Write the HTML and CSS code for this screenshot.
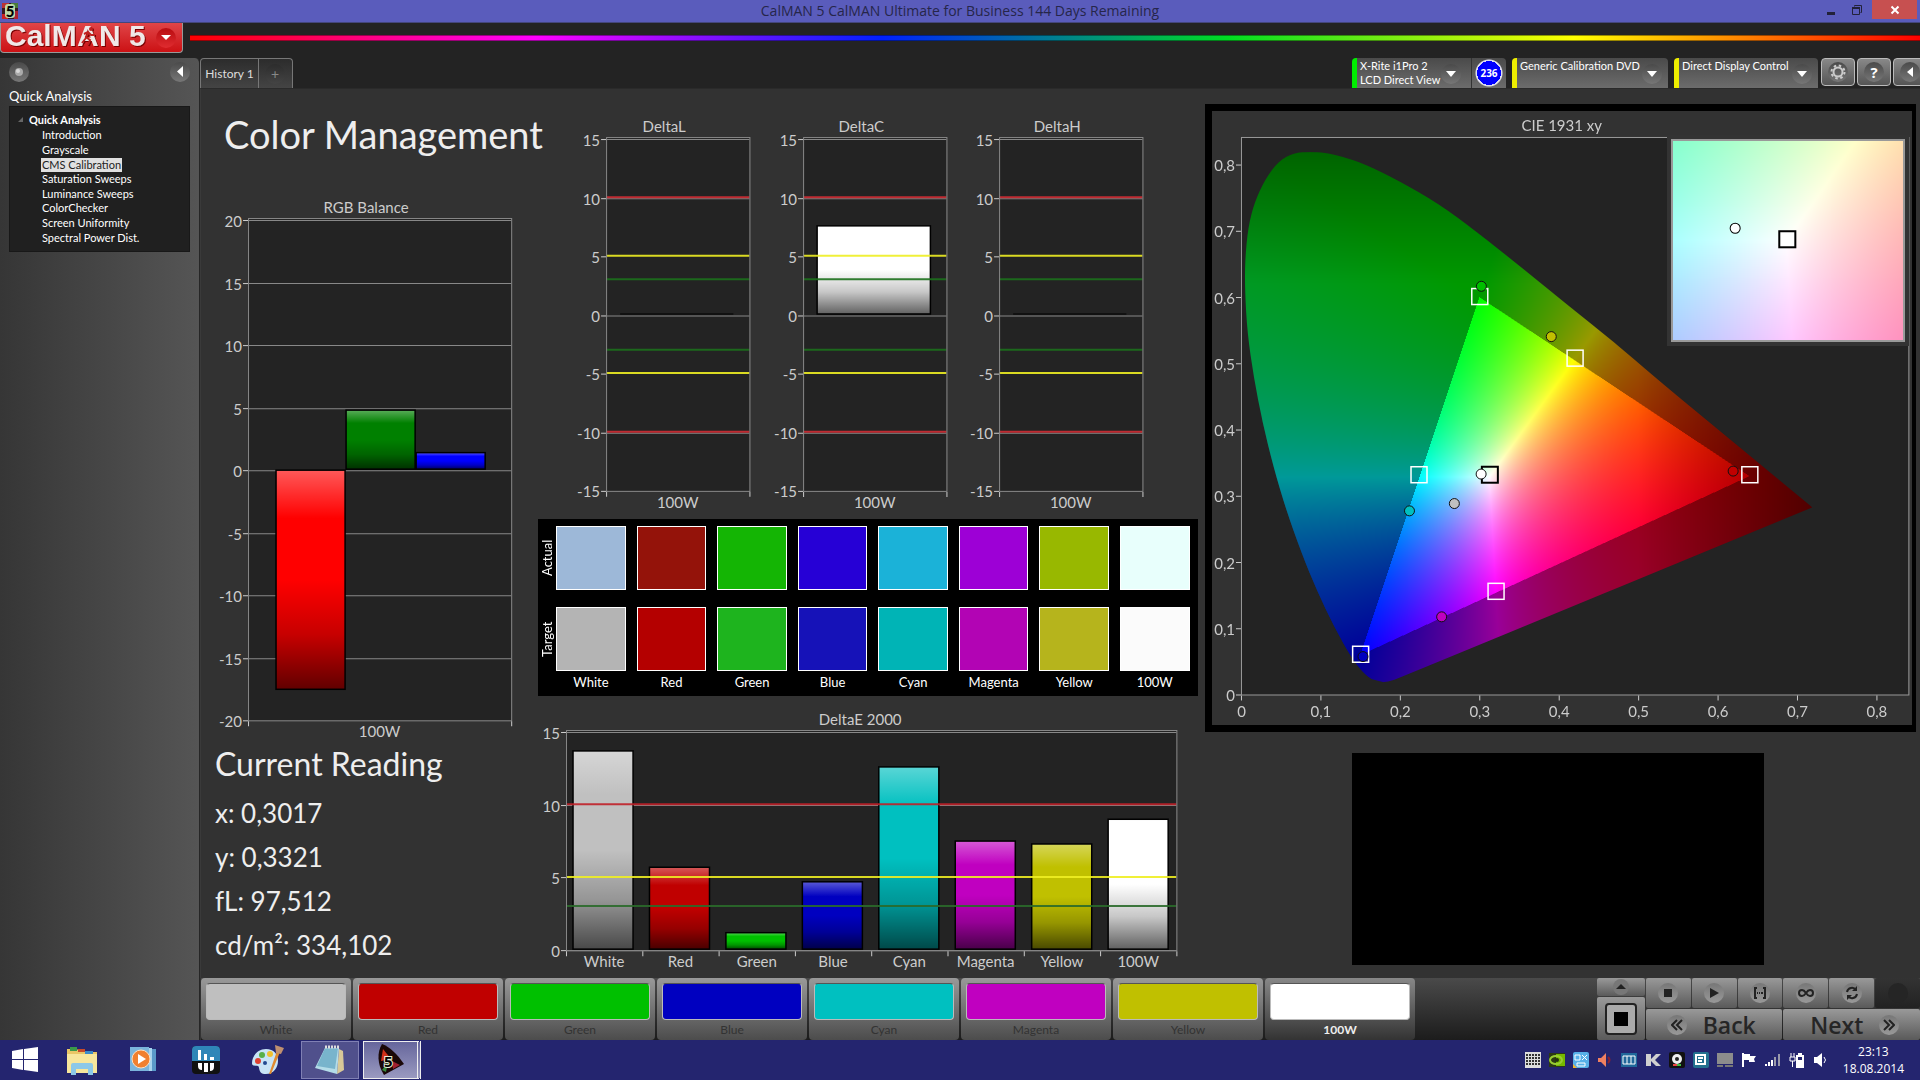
FILE: index.html
```html
<!DOCTYPE html>
<html lang="en">
<head>
    <meta charset="utf-8">
    <title>CalMAN 5</title>
    <meta name="viewport" content="width=device-width">
    <link rel="stylesheet" href="styles.css">
</head>
<body>
    <header class="titlebar">
        <svg class="app-icon" viewBox="0 0 16 16">
            <rect width="16" height="16" fill="#3a1a20"/>
            <rect width="7" height="5" fill="#b33"/><rect x="9" width="7" height="5" fill="#4a7a3a"/>
            <rect y="11" width="6" height="5" fill="#c22"/><rect x="12" y="8" width="4" height="8" fill="#a23"/>
            <rect x="3" y="1" width="10" height="14" rx="3" fill="#bcd8a8"/>
            <text x="8" y="14" text-anchor="middle" font-size="15" font-weight="900">5</text>
        </svg>
        <h1 class="titlebar-text">CalMAN 5 CalMAN Ultimate for Business 144 Days Remaining</h1>
        <div class="window-buttons">
            <button aria-label="Minimize"><svg width="12" height="12"><path d="M2 8h8v3H2z" fill="#22223a"/></svg></button>
            <button aria-label="Restore"><svg width="12" height="12" fill="none" stroke="#22223a"><path d="M3.500 2.500v-1h7v7h-1"/><path d="M1.500 4h7v6.500h-7z" /><path d="M1 4h8" stroke-width="2"/></svg></button>
            <button class="close" aria-label="Close"><svg width="10" height="10"><path d="M1.500 1.500l7 7m0-7l-7 7" stroke="#fff" stroke-width="2"/></svg></button>
        </div>
    </header>

    <div class="brandbar">
        <button class="brand" aria-label="CalMAN 5 menu">
            <svg class="brand-logo" viewBox="0 0 148 30">
                <g fill="#f0e8e8" font-family="Liberation Sans" font-weight="bold" font-size="30">
                    <text x="4" y="23">CalM</text>
                    <text x="76" y="23">A</text>
                    <text x="98" y="23">N</text>
                    <text x="128" y="23">5</text>
                </g>
                <g stroke="#c02020" stroke-width="2" fill="none">
                    <path d="M88 9l-3 5 4 3-2 5M85 15l-4 5M83 11l4-2 3 3h4"/>
                    <circle cx="90" cy="6" r="1" fill="#c02020"/>
                </g>
            </svg>
            <span class="knob knob-red"><svg width="10" height="6"><path d="M0 0h10l-5 5z" fill="#fff"/></svg></span>
        </button>
        <div class="rainbow"></div>
    </div>

    <div class="app">
        <nav class="sidebar">
            <div class="sidebar-top">
                <button class="knob" aria-label="Record"><svg width="10" height="10"><circle cx="5" cy="5" r="4" fill="#aaa"/><circle cx="4" cy="4" r="2" fill="#d8d8d8"/></svg></button>
                <button class="knob" aria-label="Collapse"><svg width="7" height="12"><path d="M6 0v11L0 5.500z" fill="#fff"/></svg></button>
            </div>
            <h2 class="sidebar-title">Quick Analysis</h2>
            <div class="tree">
                <div class="tree-root"><svg width="5" height="5"><path d="M5 0v5H0z" fill="#666"/></svg>Quick Analysis</div>
                <ul class="tree-items">
                    <li><a href="#">Introduction</a></li>
                    <li><a href="#">Grayscale</a></li>
                    <li><a href="#" class="selected">CMS Calibration</a></li>
                    <li><a href="#">Saturation Sweeps</a></li>
                    <li><a href="#">Luminance Sweeps</a></li>
                    <li><a href="#">ColorChecker</a></li>
                    <li><a href="#">Screen Uniformity</a></li>
                    <li><a href="#">Spectral Power Dist.</a></li>
                </ul>
            </div>
        </nav>

        <main class="main">
            <div class="toolbar">
                <div class="tabs">
                    <button class="tab">History 1</button>
                    <button class="tab tab-add" aria-label="Add tab"><span class="knob knob-dark">+</span></button>
                </div>
                <div class="devices">
                    <div class="device device-meter">
                        <button class="device-menu">
                            <span>X-Rite i1Pro 2<br>LCD Direct View</span>
                            <span class="knob"><svg width="10" height="6"><path d="M0 0h10l-5 6z" fill="#fff"/></svg></span>
                        </button>
                        <span class="badge">236</span>
                    </div>
                    <div class="device device-source">
                        <button class="device-menu">
                            <span>Generic Calibration DVD</span>
                            <span class="knob"><svg width="10" height="6"><path d="M0 0h10l-5 6z" fill="#fff"/></svg></span>
                        </button>
                    </div>
                    <div class="device device-display">
                        <button class="device-menu">
                            <span>Direct Display Control</span>
                            <span class="knob"><svg width="10" height="6"><path d="M0 0h10l-5 6z" fill="#fff"/></svg></span>
                        </button>
                    </div>
                    <button class="square" aria-label="Settings"><span class="knob"><svg width="16" height="16" fill="none" stroke="#ccc"><circle cx="8" cy="8" r="4.500" stroke-width="2"/><circle cx="8" cy="8" r="6.500" stroke-width="2" stroke-dasharray="2.500 2.600"/></svg></span></button>
                    <button class="square" aria-label="Help"><span class="knob knob-help">?</span></button>
                    <button class="square square-cut" aria-label="Collapse panel"><span class="knob"><svg width="7" height="10"><path d="M6 0v10L0 5z" fill="#fff"/></svg></span></button>
                </div>
            </div>

            <div class="workspace">
                <section class="col-left">
                    <h2 class="page-title">Color Management</h2>
                    <div class="rgb-chart"><svg id="rgbBalance" class="chart"></svg></div>
                    <div class="reading">
                        <h3>Current Reading</h3>
                        <p>x: 0,3017</p>
                        <p>y: 0,3321</p>
                        <p>fL: 97,512</p>
                        <p>cd/m²: 334,102</p>
                    </div>
                </section>

                <section class="col-middle">
                    <div class="delta-row">
                        <svg id="deltaL" class="chart"></svg>
                        <svg id="deltaC" class="chart"></svg>
                        <svg id="deltaH" class="chart"></svg>
                    </div>
                    <table class="swatches">
                        <tr>
                            <th scope="row"><span>Actual</span></th>
                            <td><i class="a-white"></i></td><td><i class="a-red"></i></td>
                            <td><i class="a-green"></i></td><td><i class="a-blue"></i></td>
                            <td><i class="a-cyan"></i></td><td><i class="a-magenta"></i></td>
                            <td><i class="a-yellow"></i></td><td><i class="a-100w"></i></td>
                        </tr>
                        <tr>
                            <th scope="row"><span>Target</span></th>
                            <td><i class="t-white"></i>White</td><td><i class="t-red"></i>Red</td>
                            <td><i class="t-green"></i>Green</td><td><i class="t-blue"></i>Blue</td>
                            <td><i class="t-cyan"></i>Cyan</td><td><i class="t-magenta"></i>Magenta</td>
                            <td><i class="t-yellow"></i>Yellow</td><td><i class="t-100w"></i>100W</td>
                        </tr>
                    </table>
                    <svg id="deltaE" class="chart"></svg>
                </section>

                <section class="col-right">
                    <div class="cie">
                        <canvas id="gamut"></canvas>
                        <svg id="cieChart" class="chart"></svg>
                        <div class="inset">
                            <canvas id="gamutInset"></canvas>
                            <svg viewBox="0 0 233 202">
                                <circle cx="64" cy="89" r="5" fill="#fff" stroke="#000"/>
                                <rect x="108" y="92" width="16" height="16" fill="#fff" stroke="#000" stroke-width="2"/>
                            </svg>
                        </div>
                    </div>
                    <div class="pattern-preview"></div>
                </section>
            </div>

            <footer class="bottombar">
                <div class="patches">
                    <button class="patch"><i class="p-white"></i>White</button>
                    <button class="patch"><i class="p-red"></i>Red</button>
                    <button class="patch"><i class="p-green"></i>Green</button>
                    <button class="patch"><i class="p-blue"></i>Blue</button>
                    <button class="patch"><i class="p-cyan"></i>Cyan</button>
                    <button class="patch"><i class="p-magenta"></i>Magenta</button>
                    <button class="patch"><i class="p-yellow"></i>Yellow</button>
                    <button class="patch patch-on"><i class="p-100w"></i>100W</button>
                </div>
                <div class="window-size">
                    <button class="size-up" aria-label="Pattern options"><span class="knob"><svg width="10" height="6"><path d="M0 5h10L5 0z" fill="#222"/></svg></span></button>
                    <button class="size-box" aria-label="Pattern size"><svg width="32" height="32"><rect x="1" y="1" width="30" height="30" rx="3" fill="#aaa" stroke="#222" stroke-width="2"/><path d="M9 9h14v14H9z"/></svg></button>
                </div>
                <div class="transport">
                    <button aria-label="Stop"><span class="knob"><svg width="10" height="10"><path d="M1 1h8v8H1z" fill="#222"/></svg></span></button>
                    <button aria-label="Play"><span class="knob"><svg width="10" height="12"><path d="M1 1l9 5-9 5z" fill="#222"/></svg></span></button>
                    <button aria-label="Read series"><span class="knob"><svg width="14" height="12" fill="none" stroke="#222" stroke-width="2"><path d="M4 1H2v10h2M10 1h2v10h-2M4 6h1M6 6h1M8 6h2"/></svg></span></button>
                    <button aria-label="Read continuous"><span class="knob"><svg width="16" height="10" fill="none" stroke="#222" stroke-width="2"><path d="M8 5C6 2 5 2 4 2a3 3 0 000 6c1 0 2 0 4-3s3-3 4-3a3 3 0 010 6c-1 0-2 0-4-3z"/></svg></span></button>
                    <button aria-label="Repeat"><span class="knob"><svg width="14" height="14" fill="none" stroke="#222" stroke-width="2"><path d="M2 6a5 5 0 019-2M12 8a5 5 0 01-9 2"/><path d="M12 0v5H7zM2 14V9h5z" fill="#222" stroke="none"/></svg></span></button>
                    <button class="off" aria-label="Unavailable" disabled><span class="knob"></span></button>
                    <button class="nav-button nav-back"><span class="knob"><svg width="12" height="12" fill="none" stroke="#222" stroke-width="2"><path d="M6 1L1 6l5 5M11 1L6 6l5 5"/></svg></span>Back</button>
                    <button class="nav-button nav-next">Next<span class="knob"><svg width="12" height="12" fill="none" stroke="#222" stroke-width="2"><path d="M1 1l5 5-5 5M6 1l5 5-5 5"/></svg></span></button>
                </div>
            </footer>
        </main>
    </div>

    <div class="taskbar">
        <button class="task" aria-label="Start"><svg width="26" height="26" fill="#fff"><path d="M0 4l11-2v10H0zM12 2l14-2v12H12zM0 13h11v10L0 21zM12 13h14v12l-14-2z"/></svg></button>
        <button class="task" aria-label="File Explorer"><svg width="34" height="30"><path d="M2 4h10l3 3h17v20H2z" fill="#e9c766"/><path d="M5 2h7v4H5z" fill="#3a9a4a"/><path d="M13 4h7v3h-7z" fill="#c94a2a"/><path d="M20 6h8v3h-8z" fill="#3a8ac9"/><path d="M2 9h30v19H2z" fill="#f7e69c"/><path d="M6 30V20q0-2 2-2h18q2 0 2 2v10h-5v-6H11v6z" fill="#8cc8e8"/></svg></button>
        <button class="task" aria-label="Media Player"><svg width="28" height="26"><path d="M6 2h20v22H6z" fill="#5a9ac9"/><path d="M3 1h19v23H3z" fill="#a8d4ee"/><path d="M0 0h19v24H0z" fill="#7ab4dc"/><circle cx="11" cy="12" r="9" fill="#f08030" stroke="#ffe0c0"/><path d="M8 7l8 5-8 5z" fill="#fff"/></svg></button>
        <button class="task" aria-label="HCFR"><svg width="28" height="28"><rect width="28" height="28" rx="4" fill="#111"/><path d="M0 15V4q0-4 4-4h20q4 0 4 4v11z" fill="#2f86b8"/><path d="M6 4h3v10H6zM12 8h3v6h-3zM18 11h4v3h-4zM6 17h4v7q-4 0-4-4zM12 17h4v9h-4zM18 17h4v4q0 4-4 4z" fill="#fff"/></svg></button>
        <button class="task" aria-label="Paint"><svg width="32" height="30"><path d="M14 4C5 4 0 12 0 18c0 4 4 2 6 3s0 7 6 8c9 1 14-6 14-13S22 4 14 4z" fill="#c8e4f6"/><circle cx="6" cy="16" r="3" fill="#e04030"/><circle cx="10" cy="10" r="3" fill="#58b048"/><circle cx="18" cy="9" r="3" fill="#f0c030"/><circle cx="13" cy="18" r="2" fill="#224a90"/><path d="M25 6l3 1-9 22h-2z" fill="#e08a30"/><path d="M23 0l9 3-3 6-5-1z" fill="#c09070"/></svg></button>
        <button class="task task-open" aria-label="Notepad"><svg width="30" height="30"><path d="M24 4l4 2 1 19-7 4z" fill="#d8c898"/><path d="M10 3h14l-2 26L0 23z" fill="#b4dce8"/><path d="M10 3h13l-3 21L2 21z" fill="#78b4cc"/><path d="M10 2h14" stroke="#ddd" stroke-width="3" stroke-dasharray="2 1"/></svg></button>
        <button class="task task-active" aria-label="CalMAN"><svg width="28" height="32"><path d="M5 0c8 3 15 10 22 20L7 31C0 20 0 8 5 0z" fill="#1a0808"/><path d="M6 5l8 10-10 2z" fill="#d03018"/><path d="M11 18l-6 8 4 2z" fill="#38883a"/><path d="M15 17l8 4-7 4z" fill="#a02030"/><text x="7" y="23" font-family="Open Sans" font-size="15" font-weight="bold" stroke="#e8f0d8" stroke-width="2" paint-order="stroke">5</text></svg></button>

        <div class="tray">
            <svg width="16" height="16"><rect width="16" height="16" fill="#ddd"/><path d="M1 3h14M1 6h14M1 9h14M1 12h14" stroke="#333" stroke-width="2" stroke-dasharray="2 1"/></svg>
            <svg width="16" height="16"><rect y="1" width="16" height="14" fill="#2c3a14"/><path d="M7 2h9v12H7z" fill="#76b900"/><ellipse cx="7" cy="8" rx="6" ry="4" fill="none" stroke="#9c3" stroke-width="2"/><circle cx="8" cy="8" r="2" fill="#243010"/></svg>
            <svg width="16" height="16"><rect width="16" height="16" rx="2" fill="#58b0e8"/><path d="M2 3h5v5H2zM9 3l5 5m0-5L9 8M4 11h8v3H4z" fill="none" stroke="#fff"/><path d="M0 12l4 4H0z" fill="#f0b030"/></svg>
            <svg width="16" height="16"><path d="M1 6h3l5-5v14l-5-5H1z" fill="#f08060"/><path d="M11 5q3 3 0 6" fill="none" stroke="#8a2030" stroke-width="2"/></svg>
            <svg width="16" height="16"><rect y="1" width="16" height="14" fill="#20689a"/><path d="M2 4h12v8H2zM6 4v8M10 4v8" fill="none" stroke="#fff"/></svg>
            <svg width="16" height="16"><path d="M1 2h5v5l5-5h5l-6 6 6 6h-5L6 9v5H1z" fill="#d0d0d0"/></svg>
            <svg width="16" height="16"><rect width="16" height="16" rx="2" fill="#111"/><circle cx="8" cy="7" r="5" fill="#eee"/><circle cx="8" cy="7" r="2" fill="#222"/><path d="M4 13h4" stroke="#e44" stroke-width="2"/><path d="M8 13h4" stroke="#4b4" stroke-width="2"/></svg>
            <svg width="16" height="16"><rect width="16" height="16" rx="2" fill="#23718f"/><path d="M3 3h9v9H3zM5 6h5M5 9h4" fill="none" stroke="#fff" stroke-width="2"/></svg>
            <svg width="16" height="16"><path d="M0 1h16v11H0z" fill="#8c8c8c"/><path d="M0 14h6M8 14h8" stroke="#777" stroke-width="2"/></svg>
            <svg width="16" height="16"><path d="M1 1h2v14H1zM3 2h6v2h6l-2 3 1 3H8V8H3z" fill="#fff"/></svg>
            <svg width="16" height="16" fill="#fff"><path d="M0 12h2v2H0zM3 10h2v4H3zM6 8h2v6H6z"/><path d="M9 5h2v9H9zM13 2h2v12h-2z" fill="#99a"/></svg>
            <svg width="16" height="16" fill="none" stroke="#fff"><path d="M8 4h6v11H8z" stroke-width="2"/><path d="M9 8h4v6H9zM9 1h4v2H9z" fill="#fff" stroke="none"/><path d="M2 1v4M5 1v4M1 5h5v4H1zM3.500 9v6"/></svg>
            <svg width="16" height="16"><path d="M1 5h3l5-4v14l-5-4H1z" fill="#fff"/><path d="M11 5q3 3 0 6" fill="none" stroke="#fff" stroke-width="1"/></svg>
        </div>
        <time class="clock">23:13<br>18.08.2014</time>
    </div>
    <script src="script.js"></script>
</body>
</html>
```
FILE: styles.css
```css
* {
    box-sizing: border-box;
}

body {
    margin: 0;
    height: 100vh;
    display: flex;
    flex-direction: column;
    overflow: hidden;
    background: #232323;
    color: #fff;
    font-family: 'Lato', sans-serif;
    font-size: 13px;
}

button {
    border: 0;
    padding: 0;
    background: none;
    color: inherit;
    font: inherit;
    cursor: pointer;
}

h1, h2, h3, p, ul {
    margin: 0;
    padding: 0;
    font-weight: normal;
}

svg {
    display: block;
    flex: none;
}

/* title bar */

.titlebar {
    height: 23px;
    flex: none;
    display: flex;
    align-items: center;
    background: #5a5cbc;
    border-bottom: 1px solid #44467c;
}

.app-icon {
    width: 16px;
    margin-left: 2px;
}

.titlebar-text {
    flex: 1;
    padding-left: 84px;
    text-align: center;
    font: 14px/22px 'Open Sans', sans-serif;
    color: #26264a;
}

.window-buttons {
    display: flex;
    align-self: flex-start;
    padding-right: 3px;
}

.window-buttons button {
    width: 26px;
    height: 19px;
    display: grid;
    place-items: center;
}

.window-buttons .close {
    width: 45px;
    margin-left: 2px;
    background: #c75050;
}

/* logo strip */

.brandbar {
    height: 35px;
    flex: none;
    display: flex;
    align-items: flex-start;
    gap: 7px;
}

.brand {
    width: 183px;
    height: 30px;
    display: flex;
    align-items: center;
    gap: 7px;
    background: linear-gradient(#e04548, #cc1114);
    border: 1px solid #999;
    border-top: 0;
    border-radius: 0 0 4px 4px;
}

.brand-logo {
    width: 148px;
    height: 30px;
    overflow: visible;
    filter: drop-shadow(1px 1px 0 #700);
}

.rainbow {
    flex: 1;
    height: 6px;
    margin-top: 12px;
    background: linear-gradient(to right, #f00, #f0f, #0020ff, #0d2, #ff0, #f00);
    border: solid rgba(0, 0, 0, 0.4);
    border-width: 1px 0;
}

.knob {
    width: 20px;
    height: 20px;
    flex: none;
    display: grid;
    place-items: center;
    border-radius: 50%;
    background: linear-gradient(#4a4a4a, #777);
}

.knob-red {
    background: linear-gradient(#b80c10, #e02c30);
}

.knob-dark {
    background: linear-gradient(#2c2c2c, #444);
    color: #888;
    font-size: 14px;
}

/* sidebar */

.app {
    flex: 1;
    min-height: 0;
    display: flex;
}

.sidebar {
    width: 200px;
    flex: none;
    padding: 4px 9px 0;
    background: linear-gradient(to right, #363636, #555);
    border-right: 1px solid #262626;
    border-radius: 0 5px 0 0;
}

.sidebar-top {
    display: flex;
    justify-content: space-between;
}

.sidebar-title {
    margin-top: 4px;
    font-size: 13px;
    line-height: 20px;
}

.tree {
    padding: 4px 0 6px;
    background: #202020;
    border: 1px solid #181818;
    font-size: 11px;
}

.tree-root {
    display: flex;
    align-items: center;
    gap: 6px;
    padding-left: 8px;
    line-height: 17px;
    font-weight: bold;
}

.tree-items {
    height: 117px;
    padding-left: 31px;
    display: grid;
    grid-auto-rows: 1fr;
    align-items: center;
    list-style: none;
    line-height: 14px;
}

.tree-items a {
    display: inline-block;
    padding: 0 1px;
    color: #fff;
    text-decoration: none;
}

.tree-items .selected {
    background: #e0e0e0;
    color: #222;
}

/* tabs and devices */

.main {
    flex: 1;
    min-width: 0;
    display: flex;
    flex-direction: column;
}

.toolbar {
    height: 30px;
    flex: none;
    display: flex;
    justify-content: space-between;
    font-size: 12px;
}

.tabs {
    display: flex;
    border: 1px solid #777;
    border-bottom: 0;
    border-radius: 4px 4px 0 0;
    background: linear-gradient(#2c2c2c, #444);
}

.tab {
    width: 57px;
    color: #ddd;
}

.tab-add {
    width: 34px;
    padding-left: 6px;
    border-left: 1px solid #777;
}

.devices {
    display: flex;
    margin-right: -9px;
}

.device {
    display: flex;
    align-items: center;
    margin-right: 6px;
    background: linear-gradient(#4a4a4a, #6c6c6c);
    border-left: 5px solid #ee0;
    border-radius: 4px 4px 0 0;
    font-size: 11px;
    line-height: 14px;
}

.device-meter {
    width: 154px;
    border-left-color: #0e0;
}

.device-source {
    width: 156px;
}

.device-display {
    width: 144px;
    margin-right: 3px;
}

.device-menu {
    flex: 1;
    min-width: 0;
    align-self: stretch;
    display: flex;
    justify-content: space-between;
    padding: 1px 6px 0 3px;
    text-align: left;
    white-space: nowrap;
}

.device-menu .knob {
    align-self: center;
}

.device-meter .knob {
    margin-right: 4px;
}

.badge {
    width: 35px;
    height: 30px;
    display: grid;
    place-items: center;
    border-left: 1px solid #333;
    background: radial-gradient(circle, #00f 12px, #dde 12px, #dde 13px, transparent 14px);
    font: bold 10px 'Open Sans', sans-serif;
}

.square {
    width: 34px;
    height: 28px;
    margin-right: 2px;
    display: grid;
    place-items: center;
    background: linear-gradient(#888, #555);
    border: 1px solid #bbb;
    border-radius: 4px;
}

.knob-help {
    font: bold 15px 'Open Sans', sans-serif;
}

/* workspace */

.workspace {
    flex: 1;
    min-height: 0;
    display: grid;
    grid-template-columns: minmax(0, 329fr) minmax(0, 659fr) minmax(0, 711fr);
    column-gap: 7px;
    padding: 15px 4px 0 1px;
    background: #323232;
    border-top: 1px solid #2a2a2a;
    border-left: 1px solid #3a3a3a;
}

.chart {
    width: 100%;
    height: auto;
    color: #ccc;
    font-size: 15px;
}

.page-title {
    margin: 8px 0 39px 22px;
    font-size: 38px;
    line-height: 44px;
    white-space: nowrap;
    color: #eee;
}

.rgb-chart {
    padding: 0 13px 0 16px;
}

.reading {
    padding: 1px 0 0 13px;
    color: #eee;
    font-size: 26px;
    line-height: 44px;
}

.reading h3 {
    margin-bottom: 3px;
    font-size: 32px;
    line-height: 48px;
}

.delta-row {
    display: grid;
    grid-template-columns: repeat(3, 1fr);
    padding: 12px 40px 7px 30px;
}

.swatches {
    width: 100%;
    table-layout: fixed;
    border-spacing: 0;
    margin-bottom: 12px;
    padding-top: 7px;
    background: #000;
    line-height: 22px;
    text-align: center;
}

.swatches th {
    width: 15px;
    height: 81px;
    padding: 0;
    vertical-align: top;
    font-weight: normal;
    line-height: 18px;
}

.swatches th span {
    height: 64px;
    writing-mode: vertical-rl;
    transform: rotate(180deg);
    text-align: center;
}

.swatches td {
    padding: 0 8px 0 3px;
    vertical-align: top;
}

.swatches i {
    display: block;
    height: 64px;
    border: 1px solid #fff;
}

.swatches tr:last-child td {
    padding-bottom: 3px;
}

.a-white { background: #9db8d8; }
.a-red { background: #94130a; }
.a-green { background: #14b504; }
.a-blue { background: #2600d6; }
.a-cyan { background: #1bb2d8; }
.a-magenta { background: #9d00d6; }
.a-yellow { background: #98b800; }
.a-100w { background: #e8fffc; }
.t-white { background: #b4b4b4; }
.t-red { background: #b40000; }
.t-green { background: #1eb41e; }
.t-blue { background: #1612b8; }
.t-cyan { background: #00b4b6; }
.t-magenta { background: #b204b4; }
.t-yellow { background: #b6b41c; }
.t-100w { background: #fbfbfb; }

.cie {
    position: relative;
    border: 7px solid #000;
    border-right-width: 4px;
}

/* the canvas lies under the plot area of the chart */
.cie #gamut {
    position: absolute;
    left: 4.200%;
    top: 4.200%;
    width: 95.300%;
    height: 90.800%;
}

.cie .chart {
    position: relative;
}

.inset {
    position: absolute;
    right: 3px;
    top: 24px;
    width: 34.500%;
    border: 4px solid #333;
}

.inset canvas {
    display: block;
    width: 100%;
    aspect-ratio: 233 / 202;
    border: 2px solid #999;
}

.inset svg {
    position: absolute;
    inset: 0;
    width: 100%;
}

.pattern-preview {
    width: 58%;
    aspect-ratio: 411 / 211;
    margin: 21px auto 0 147px;
    background: #000;
}

/* bottom bar */

.bottombar {
    height: 62px;
    flex: none;
    display: flex;
    background: linear-gradient(#4a4a4a, #1c1c1c);
    border-left: 1px solid #333;
}

.patches {
    flex: 1;
    display: flex;
    gap: 2px;
}

.patch {
    width: 150px;
    padding: 5px 5px 0;
    background: linear-gradient(#999, #4c4c4c);
    border-radius: 4px;
    color: #333;
    font-size: 12px;
    line-height: 20px;
}

.patch i {
    display: block;
    height: 37px;
    border: 1px solid #bbb;
    border-top-color: #555;
    border-radius: 4px;
}

.patch-on {
    background: linear-gradient(#888, #333);
    color: #eee;
    font-weight: bold;
}

.p-white { background: #bfbfbf; }
.p-red { background: #c00000; }
.p-green { background: #00c000; }
.p-blue { background: #0000c0; }
.p-cyan { background: #00c0c0; }
.p-magenta { background: #c000c0; }
.p-yellow { background: #c0c000; }
.p-100w { background: #fff; }

.window-size {
    width: 48px;
    margin-right: 1px;
    display: grid;
    grid-template-rows: 18px 1fr;
    gap: 1px;
}

.window-size button,
.transport button {
    display: flex;
    align-items: center;
    justify-content: center;
    background: linear-gradient(#999, #5a5a5a);
    border-radius: 2px;
}

.window-size .knob {
    width: 16px;
    height: 16px;
    background: #777;
}

.transport {
    width: 274px;
    display: grid;
    grid-template-columns: repeat(6, 1fr);
    grid-template-rows: 30px 1fr;
    gap: 1px;
}

.transport .knob {
    background: linear-gradient(#777, #999);
}

.transport .off {
    background: linear-gradient(#333, #222);
}

.transport .off .knob {
    background: #252525;
}

.transport .nav-button {
    grid-column: span 3;
    gap: 16px;
    color: #262626;
    font: 600 23px/28px 'Open Sans', sans-serif;
}

.transport .nav-back {
    padding-right: 6px;
}

.transport .nav-next {
    padding-left: 6px;
}

/* taskbar */

.taskbar {
    height: 40px;
    flex: none;
    display: flex;
    align-items: center;
    padding-right: 16px;
    background: #24256f;
}

.task {
    width: 58px;
    height: 38px;
    margin-right: 4px;
    display: grid;
    place-items: center;
}

.task:first-child {
    width: 49px;
}

.task-open {
    background: #50508c;
    border: 1px solid #8080b4;
}

.task-active {
    background: linear-gradient(#66669c, #9a9ac0);
    border: 1px solid #eee;
    border-right: 4px double #eee;
}

.tray {
    display: flex;
    gap: 8px;
    margin: 0 14px 0 auto;
}

.clock {
    text-align: center;
    font: 12px/17px 'Open Sans', sans-serif;
}
```
FILE: script.js
```javascript
var SVG_NS = 'http://www.w3.org/2000/svg';

function add(parent, name, attrs, text) {
    var el = document.createElementNS(SVG_NS, name);
    for (var key in attrs) el.setAttribute(key, attrs[key]);
    if (text !== undefined) el.textContent = text;
    parent.appendChild(el);
    return el;
}

function label(svg, x, y, text, anchor) {
    add(svg, 'text', { x: x, y: y, fill: 'currentColor', 'text-anchor': anchor || 'middle' }, text);
}

function line(svg, x1, y1, x2, y2, color, width, opacity) {
    add(svg, 'line', { x1: x1, y1: y1, x2: x2, y2: y2, stroke: color, 'stroke-width': width || 1, 'stroke-opacity': opacity || 1 });
}

function gloss(svg, id) {
    var g = add(add(svg, 'defs', {}), 'linearGradient', { id: id, x1: 0, y1: 0, x2: 0, y2: 1 });
    [[0, '#fff', 0.35], [0.22, '#fff', 0], [0.5, '#000', 0], [0.75, '#000', 0.22], [1, '#000', 0.62]].forEach(function (s) {
        add(g, 'stop', { offset: s[0], 'stop-color': s[1], 'stop-opacity': s[2] });
    });
}

function barChart(id, c) {
    var svg = document.getElementById(id);
    var scale = (c.bottom - c.top) / (c.max - c.min);
    var y = function (v) { return c.bottom - (v - c.min) * scale; };

    svg.setAttribute('viewBox', '0 0 ' + c.width + ' ' + c.height);
    gloss(svg, id + 'Gloss');
    label(svg, c.titleX, c.top - 7, c.title);
    add(svg, 'rect', { x: c.left, y: c.top - 2, width: c.right - c.left, height: c.bottom - c.top + 2, fill: '#232323' });

    for (var v = c.min; v <= c.max; v += 5) {
        var ty = Math.round(y(v)) + 0.5;
        if (c.grid.indexOf(v) >= 0) line(svg, c.left, ty, c.right, ty, '#888');
        line(svg, c.left - 5, ty, c.left, ty, '#ccc');
        label(svg, c.left - 6, ty + 6, v, 'end');
    }

    c.bars.forEach(function (b) {
        var top = Math.min(y(b.value), y(0));
        var box = { x: b.x, y: top, width: b.width, height: Math.max(1, Math.abs(y(b.value) - y(0)) - 1) };
        if (!b.value) {
            line(svg, b.x, top - 1, b.x + b.width, top - 1, '#000');
            return;
        }
        add(svg, 'rect', Object.assign({ fill: b.color }, box));
        add(svg, 'rect', Object.assign({ fill: 'url(#' + id + 'Gloss)', stroke: '#000', 'stroke-width': 1.5 }, box));
    });

    (c.limits || []).forEach(function (l) {
        line(svg, c.left, y(l[0]) - 0.5, c.right, y(l[0]) - 0.5, l[1], 2, 0.9);
    });

    add(svg, 'rect', { x: c.left + 0.5, y: c.top - 1.5, width: c.right - c.left, height: c.bottom - c.top + 2, fill: 'none', stroke: '#888' });
    var step = (c.right - c.left) / c.labels.length;
    for (var i = 0; i <= c.labels.length; i++) {
        line(svg, c.left + 0.5 + i * step, c.bottom + 1, c.left + 0.5 + i * step, c.bottom + 6, '#ccc');
    }
    c.labels.forEach(function (text, n) {
        label(svg, c.left + (n + 0.5) * step, c.bottom + 17, text);
    });
}

barChart('rgbBalance', {
    title: 'RGB Balance', titleX: 148, width: 300, height: 544,
    left: 30, right: 293, top: 25, bottom: 525, min: -20, max: 20,
    grid: [-15, -10, -5, 0, 5, 10, 15, 20],
    bars: [
        { x: 58, width: 69, value: -17.6, color: '#f00' },
        { x: 128, width: 69, value: 4.8, color: '#008000' },
        { x: 198, width: 69, value: 1.4, color: '#00f' }
    ],
    labels: ['100W']
});

[['deltaL', 'DeltaL', 0], ['deltaC', 'DeltaC', 7.6], ['deltaH', 'DeltaH', 0]].forEach(function (d) {
    barChart(d[0], {
        title: d[1], titleX: 96, width: 196, height: 395,
        left: 38, right: 181, top: 23, bottom: 374, min: -15, max: 15,
        grid: [-10, 0, 10, 15],
        bars: [{ x: 52, width: 113, value: d[2], color: '#fff' }],
        limits: [[10, '#d02c34'], [5, '#ee2'], [3, '#1c701c'], [-3, '#1c701c'], [-5, '#ee2'], [-10, '#d02c34']],
        labels: ['100W']
    });
});

var patches = [
    ['White', 13.7, '#c0c0c0'], ['Red', 5.7, '#c00000'], ['Green', 1.2, '#00c000'], ['Blue', 4.7, '#0000c0'],
    ['Cyan', 12.6, '#00c0c0'], ['Magenta', 7.5, '#c000c0'], ['Yellow', 7.3, '#c0c000'], ['100W', 9, '#fff']
];

barChart('deltaE', {
    title: 'DeltaE 2000', titleX: 322, width: 659, height: 266,
    left: 28, right: 638, top: 24, bottom: 242, min: 0, max: 15,
    grid: [0, 10, 15],
    bars: patches.map(function (p, i) {
        return { x: 35 + i * 76.4, width: 60, value: p[1], color: p[2] };
    }),
    limits: [[10, '#c02028'], [5, '#ee2'], [3, '#2a6a2a']],
    labels: patches.map(function (p) { return p[0]; })
});

/* chromaticity diagram */

var RED = [0.64, 0.33], GREEN = [0.30, 0.60], BLUE = [0.15, 0.06];

function side(a, b, x, y) {
    return (b[0] - a[0]) * (y - a[1]) - (b[1] - a[1]) * (x - a[0]);
}

function inGamut(x, y) {
    return side(RED, GREEN, x, y) >= 0 && side(GREEN, BLUE, x, y) >= 0 && side(BLUE, RED, x, y) >= 0;
}

function colorAt(x, y) {
    var X = x / y, Z = (1 - x - y) / y;
    var rgb = [
        3.2406 * X - 1.5372 - 0.4986 * Z,
        -0.9689 * X + 1.8758 + 0.0415 * Z,
        0.0557 * X - 0.2040 + 1.0570 * Z
    ].map(function (v) { return Math.max(0, v); });
    var k = 255 / Math.max(rgb[0], rgb[1], rgb[2]);
    if (!inGamut(x, y)) k *= 0.6;
    k *= 1 - Math.max(0, x - 0.5) * 2.15;
    k *= 1 - Math.max(0, y - 0.62) * 1.75;
    return rgb.map(function (v) { return v * k; });
}

function paint(canvas, w, h, x0, x1, y0, y1) {
    canvas.width = w;
    canvas.height = h;
    var ctx = canvas.getContext('2d');
    var img = ctx.createImageData(w, h);
    for (var j = 0, o = 0; j < h; j++) {
        var y = y1 - (j + 0.5) / h * (y1 - y0);
        for (var i = 0; i < w; i++, o += 4) {
            var c = colorAt(x0 + (i + 0.5) / w * (x1 - x0), y);
            img.data[o] = c[0];
            img.data[o + 1] = c[1];
            img.data[o + 2] = c[2];
            img.data[o + 3] = 255;
        }
    }
    ctx.putImageData(img, 0, 0);
    return ctx;
}

var LOCUS = [
    [0.172, 0.019], [0.157, 0.029], [0.140, 0.054], [0.117, 0.103], [0.096, 0.156], [0.076, 0.214],
    [0.056, 0.282], [0.041, 0.343], [0.027, 0.411], [0.016, 0.479], [0.008, 0.546], [0.005, 0.608],
    [0.005, 0.655], [0.009, 0.706], [0.017, 0.743], [0.030, 0.777], [0.047, 0.805], [0.067, 0.818],
    [0.088, 0.819], [0.105, 0.818], [0.128, 0.812], [0.157, 0.800], [0.198, 0.776], [0.250, 0.740],
    [0.296, 0.699], [0.354, 0.644], [0.411, 0.588], [0.469, 0.533], [0.527, 0.473], [0.614, 0.387],
    [0.719, 0.283], [0.719, 0.283], [0.200, 0.026], [0.186, 0.020]
];

var X_MAX = 0.8395, Y_MAX = 0.8415;
var W = 1336, H = 1116;
var ctx = paint(document.getElementById('gamut'), W, H, 0, X_MAX, 0, Y_MAX);

/* cut the field to the spectral locus, the rest keeps the plot background */
ctx.globalCompositeOperation = 'destination-in';
ctx.beginPath();
LOCUS.forEach(function (p, i) {
    var q = LOCUS[(i + 1) % LOCUS.length];
    var mx = (p[0] + q[0]) / 2 / X_MAX * W, my = H - (p[1] + q[1]) / 2 / Y_MAX * H;
    if (i === 0) ctx.moveTo(mx, my);
    else ctx.quadraticCurveTo(p[0] / X_MAX * W, H - p[1] / Y_MAX * H, mx, my);
});
ctx.closePath();
ctx.fill();
ctx.globalCompositeOperation = 'destination-over';
ctx.fillStyle = '#232323';
ctx.fillRect(0, 0, W, H);

paint(document.getElementById('gamutInset'), 233, 202, 0.288, 0.338, 0.304, 0.354);

(function () {
    var svg = document.getElementById('cieChart');
    var px = function (x) { return 29.5 + x * 795; };
    var py = function (y) { return 584.5 - y * 663; };
    svg.setAttribute('viewBox', '0 0 701 615');
    label(svg, 350, 20, 'CIE 1931 xy');
    add(svg, 'rect', { x: 29.5, y: 26.5, width: 668, height: 558, fill: 'none', stroke: '#999' });
    for (var i = 0; i <= 8; i++) {
        var text = i ? '0,' + i : '0';
        line(svg, px(i / 10), 585, px(i / 10), 590, '#ccc');
        line(svg, 24, py(i / 10), 29, py(i / 10), '#ccc');
        label(svg, px(i / 10), 607, text);
        label(svg, 23, py(i / 10) + 6, text, 'end');
    }
    [[0.30, 0.60], [0.42, 0.507], [0.64, 0.331], [0.2235, 0.331], [0.3205, 0.155], [0.15, 0.06], [0.3127, 0.331]].forEach(function (t, n) {
        add(svg, 'rect', {
            x: px(t[0]) - 8, y: py(t[1]) - 9, width: 16, height: 16,
            fill: 'none', stroke: n === 6 ? '#000' : '#fff', 'stroke-width': n === 6 ? 2 : 1.5
        });
    });
    [[0.302, 0.617, '#00c000'], [0.39, 0.541, '#c0c000'], [0.619, 0.338, '#c00000'], [0.2115, 0.278, '#00c0c0'],
     [0.268, 0.289, '#c0c0c0'], [0.252, 0.118, '#c000c0'], [0.153, 0.058, '#0000c0'], [0.3017, 0.3335, '#fff']].forEach(function (m) {
        add(svg, 'circle', { cx: px(m[0]), cy: py(m[1]), r: 5, fill: m[2], stroke: '#111' });
    });
})();
```
